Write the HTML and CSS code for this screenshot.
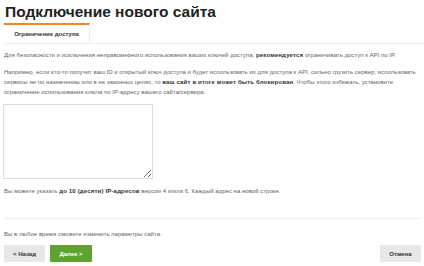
FILE: index.html
```html
<!DOCTYPE html>
<html lang="ru">
<head>
<meta charset="utf-8">
<link rel="stylesheet" href="styles.css">
</head>
<body>
<div class="page">
  <h1 class="title">Подключение нового сайта</h1>
  <div class="tabs">
    <div class="tab active">Ограничение доступа</div>
  </div>
  <p class="text p1">Для безопасности и исключения неправомерного использования ваших ключей доступа, <b>рекомендуется</b> ограничивать доступ к API по IP.</p>
  <p class="text p2">Например, если кто-то получит ваш ID и открытый ключ доступа и будет использовать их для доступа к API, сильно грузить сервер, использовать сервисы не по назначению или в не законных целях, то <b>ваш сайт в итоге может быть блокирован</b>. Чтобы этого избежать, установите ограничение использования ключа по IP-адресу вашего сайта/сервера.</p>
  <div class="field"><textarea class="ips"></textarea></div>
  <p class="text note">Вы можете указать <b>до 10 (десяти) IP-адресов</b> версии 4 и/или 6. Каждый адрес на новой строке.</p>
  <div class="sep"></div>
  <p class="text p3">Вы в любое время сможете изменить параметры сайта.</p>
  <div class="actions">
    <button class="btn gray">&lt; Назад</button>
    <button class="btn green">Далее &gt;</button>
    <span class="spacer"></span>
    <button class="btn gray">Отмена</button>
  </div>
</div>
</body>
</html>
```
FILE: styles.css
```css
html, body {
  margin: 0;
  padding: 0;
  background: #fff;
}
.page {
  width: 424px;
  height: 266px;
  box-sizing: border-box;
  padding: 2px 3px 0 4px;
  font-family: "Liberation Sans", Arial, sans-serif;
  color: #666;
  overflow: hidden;
}
.title {
  margin: 0 0 0 1px;
  font-size: 15.5px;
  line-height: 20px;
  font-weight: bold;
  color: #222;
}
.tabs {
  margin-top: 1px;
  display: flex;
  border-bottom: 1px solid #eee;
  margin-right: -3px;
}
.tab {
  width: 85px;
  height: 18px;
  box-sizing: content-box;
  border-top: 2px solid #f0862a;
  border-right: 1px solid #eee;
  font-size: 6px;
  line-height: 18px;
  font-weight: bold;
  color: #333;
  text-align: center;
}
.text {
  margin: 0;
  font-size: 6.05px;
  line-height: 10px;
  color: #666;
}
.text b {
  color: #333;
  letter-spacing: 0.15px;
}
.p1 { margin-top: 6px; }
.p2 { margin-top: 7px; margin-right: -3px; }
.field {
  margin-top: 7px;
  margin-left: -1px;
}
.ips {
  display: block;
  width: 150px;
  height: 75px;
  box-sizing: border-box;
  border: 1px solid #ddd;
  background: #fff;
  margin: 0;
  padding: 0;
  resize: vertical;
  outline: none;
}
.note { margin-top: 7px; }
.sep {
  margin-top: 22px;
  height: 1px;
  background: #eee;
}
.p3 { margin-top: 10px; }
.actions {
  margin-top: 6px;
  display: flex;
  gap: 5px;
}
.spacer { flex: 1; }
.btn {
  height: 17px;
  border: none;
  border-radius: 1px;
  font-family: "Liberation Sans", Arial, sans-serif;
  font-size: 6px;
  font-weight: bold;
  padding: 0;
  cursor: pointer;
}
.gray {
  width: 41px;
  background: #e8e8e8;
  color: #333;
}
.green {
  width: 42px;
  background: #5ea32e;
  color: #fff;
}
```
